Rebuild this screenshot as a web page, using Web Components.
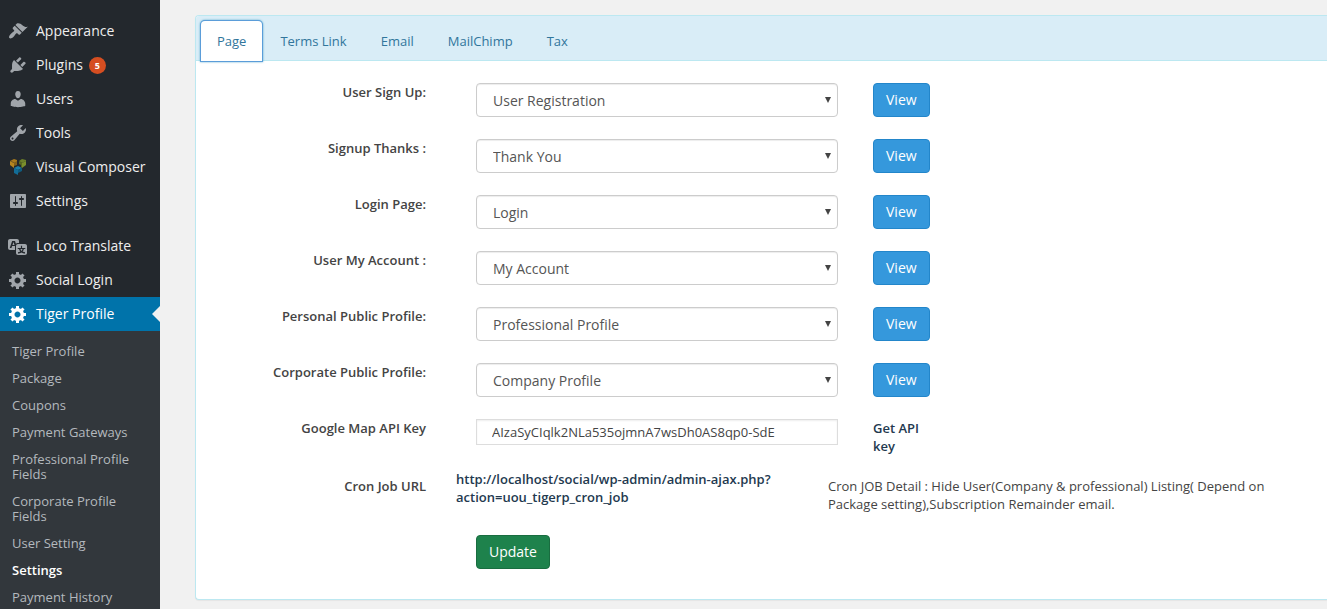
<!DOCTYPE html>
<html lang="en">
<head>
<meta charset="utf-8">
<title>Tiger Profile Settings</title>
<style>
  html { background: #f1f1f1; }
  body { margin: 0; font: 13px/18px "Open Sans", sans-serif; color: #444; }
</style>
</head>
<body>
<admin-app>
  <admin-menu slot="menu">
    <menu-item icon="appearance">Appearance</menu-item>
    <menu-item icon="plugins" count="5">Plugins</menu-item>
    <menu-item icon="users">Users</menu-item>
    <menu-item icon="tools">Tools</menu-item>
    <menu-item icon="composer">Visual Composer</menu-item>
    <menu-item icon="settings">Settings</menu-item>
    <menu-gap></menu-gap>
    <menu-item icon="translate">Loco Translate</menu-item>
    <menu-item icon="gear">Social Login</menu-item>
    <menu-item icon="gear" current>Tiger Profile</menu-item>
    <sub-menu>
      <sub-item>Tiger Profile</sub-item>
      <sub-item>Package</sub-item>
      <sub-item>Coupons</sub-item>
      <sub-item>Payment Gateways</sub-item>
      <sub-item>Professional Profile Fields</sub-item>
      <sub-item>Corporate Profile Fields</sub-item>
      <sub-item>User Setting</sub-item>
      <sub-item current>Settings</sub-item>
      <sub-item>Payment History</sub-item>
    </sub-menu>
  </admin-menu>
  <settings-panel>
    <tab-link slot="tabs" active>Page</tab-link>
    <tab-link slot="tabs">Terms Link</tab-link>
    <tab-link slot="tabs">Email</tab-link>
    <tab-link slot="tabs">MailChimp</tab-link>
    <tab-link slot="tabs">Tax</tab-link>
    <page-select label="User Sign Up:" value="User Registration"></page-select>
    <page-select label="Signup Thanks :" value="Thank You"></page-select>
    <page-select label="Login Page:" value="Login"></page-select>
    <page-select label="User My Account :" value="My Account"></page-select>
    <page-select label="Personal Public Profile:" value="Professional Profile"></page-select>
    <page-select label="Corporate Public Profile:" value="Company Profile"></page-select>
    <api-key-row></api-key-row>
    <cron-row></cron-row>
    <submit-row>Update</submit-row>
  </settings-panel>
</admin-app>

<script>
const define = (name, render) => customElements.define(name, class extends HTMLElement {
  connectedCallback() {
    if (this.shadowRoot) return;
    this.attachShadow({ mode: "open" }).innerHTML = render(this);
  }
});

const icons = {
  appearance: '<path d="M14.48 11.06L7.41 3.99l1.5-1.5c.5-.56 2.3-.47 3.51.32 1.21.8 1.43 1.28 2.91 2.1 1.18.64 2.45 1.26 4.45.85zm-.71.71L6.7 4.7 4.93 6.47c-.39.39-.39 1.02 0 1.41l1.06 1.06c.39.39.39 1.03 0 1.42-.6.6-1.43 1.11-2.21 1.69-.35.26-.7.53-1.01.84C1.43 14.23.4 16.08 1.4 17.07c.99 1 2.84-.03 4.18-1.36.31-.31.58-.66.85-1.02.57-.78 1.08-1.61 1.69-2.21.39-.39 1.02-.39 1.41 0l1.06 1.06c.39.39 1.02.39 1.41 0z"/>',
  plugins: '<path d="M13.11 4.36L9.87 7.6 8 5.73l3.24-3.24c.35-.34 1.05-.2 1.56.32.52.51.66 1.21.31 1.55zm-8 1.77l.91-1.12 9.01 9.01-1.19.84c-.71.71-2.63 1.16-3.82 1.16H6.14L4.9 17.26c-.59.59-1.54.59-2.12 0-.59-.58-.59-1.53 0-2.12l1.24-1.24v-3.88c0-1.13.4-3.19 1.09-3.89zm7.26 3.97l3.24-3.24c.34-.35 1.04-.21 1.55.31.52.51.66 1.21.31 1.55l-3.24 3.25z"/>',
  users: '<path d="M10 9.25c-2.27 0-2.73-3.44-2.73-3.44C7 4.02 7.82 2 9.97 2c2.16 0 2.98 2.02 2.71 3.81 0 0-.41 3.44-2.68 3.44zm0 2.57L12.72 10c2.39 0 4.52 2.33 4.52 4.53v2.49s-3.65 1.13-7.24 1.13c-3.65 0-7.24-1.13-7.24-1.13v-2.49c0-2.25 1.94-4.48 4.47-4.48z"/>',
  tools: '<path d="M16.68 9.77c-1.34 1.34-3.3 1.67-4.95.99l-5.41 6.52c-.99.99-2.59.99-3.58 0s-.99-2.59 0-3.57l6.52-5.42c-.68-1.65-.35-3.61.99-4.95 1.28-1.28 3.12-1.62 4.72-1.06l-2.89 2.89 2.82 2.82 2.86-2.87c.53 1.58.18 3.39-1.08 4.65zM3.81 16.21c.4.39 1.04.39 1.43 0 .4-.4.4-1.04 0-1.43-.39-.4-1.03-.4-1.43 0-.39.39-.39 1.03 0 1.43z"/>',
  composer: '<path fill="#a87a1c" d="M2 4l4-2 3 1v2L6 6 5 5z"/><path fill="#b5851f" d="M2 4l4 2v5L2 8z"/><path fill="#84611a" d="M6 6l3-2v4l-3 1z"/><path fill="#6d8029" d="M11 4l3-2 4 1v1l-4 2z"/><path fill="#59691f" d="M11 4l3 2v5l-1-1V8l-2-1z"/><path fill="#7b8f2c" d="M14 6l4-2v4l-4 3z"/><path fill="#1c7fa8" d="M6 11l4-2 4 2-4 2z"/><path fill="#136d97" d="M6 11l4 2v5l-4-2z"/><path fill="#0f5c80" d="M10 13l4-2v3l-4 2z"/>',
  settings: '<path d="M18 16V4c0-.55-.45-1-1-1H3c-.55 0-1 .45-1 1v12c0 .55.45 1 1 1h14c.55 0 1-.45 1-1zM8 11h1c.55 0 1 .45 1 1s-.45 1-1 1H8v1.500c0 .28-.22.5-.5.5s-.5-.22-.5-.5V13H6c-.55 0-1-.45-1-1s.45-1 1-1h1V5.500c0-.28.22-.5.5-.5s.5.22.5.5V11zm5-2h-1c-.55 0-1-.45-1-1s.45-1 1-1h1V5.500c0-.28.22-.5.5-.5s.5.22.5.5V7h1c.55 0 1 .45 1 1s-.45 1-1 1h-1v5.500c0 .28-.22.5-.5.5s-.5-.22-.5-.5V9z"/>',
  translate: '<path d="M11 7H9.490c-.63 0-1.250.3-1.590.7L7 5H4.130l-2.390 7h1.690l.74-2H7v4H2c-1.100 0-2-.9-2-2V5c0-1.100.9-2 2-2h7c1.100 0 2 .9 2 2v2zM6.510 9H4.490l1-2.930zM10 8h7c1.100 0 2 .9 2 2v7c0 1.100-.9 2-2 2h-7c-1.100 0-2-.9-2-2v-7c0-1.100.9-2 2-2zm7.250 5v-1.080h-3.170V9.750h-1.160v2.170H9.750V13h1.280c.11.85.56 1.850 1.280 2.620-.87.36-1.890.62-2.310.62-.01.02.22.97.2 1.460.84 0 2.210-.5 3.280-1.150 1.090.65 2.480 1.150 3.340 1.150-.02-.49.2-1.440.2-1.460-.43 0-1.490-.27-2.380-.63.7-.77 1.140-1.770 1.250-2.610h1.360zm-3.810 1.930c-.5-.46-.85-1.130-1.010-1.930h2.090c-.17.8-.51 1.470-1 1.930l-.04.03s-.03-.02-.04-.03z"/>',
  gear: '<path d="M18 12h-2.180c-.17.7-.44 1.350-.81 1.930l1.540 1.540-2.100 2.100-1.540-1.540c-.58.36-1.230.63-1.910.79V19H8v-2.180c-.68-.16-1.330-.43-1.910-.79l-1.540 1.540-2.120-2.120 1.540-1.540c-.36-.58-.63-1.230-.79-1.910H1V9.030h2.170c.16-.7.44-1.350.8-1.940L2.430 5.550l2.100-2.100 1.540 1.540c.58-.37 1.240-.64 1.930-.81V2h3v2.180c.68.16 1.330.43 1.910.79l1.540-1.540 2.120 2.120-1.540 1.540c.36.59.64 1.240.8 1.940H18V12zm-8.500 1.500c1.660 0 3-1.340 3-3s-1.340-3-3-3-3 1.340-3 3 1.340 3 3 3z"/>'
};

const reset = "*{box-sizing:border-box}";
// Column grid shared by the form rows
const row = `${reset}
  :host{display:grid;grid-template-columns:minmax(0,280fr) minmax(0,362fr) minmax(0,489fr);align-items:start;margin-bottom:22px}
  .label{padding-right:50px;text-align:right;font-weight:600}
  .side{padding-left:35px}
  a.strong{color:#23394f;font-weight:600;text-decoration:none}`;
const button = `.btn{display:inline-block;height:34px;padding:7px 12px;border:1px solid;border-radius:4px;
  font:14px/18px "Open Sans",sans-serif;color:#fff;text-decoration:none;vertical-align:top}`;

define("admin-app", () => `<style>${reset}
  :host{display:flex;height:100vh;overflow:hidden}
  main{flex:1;min-width:0;padding:15px 0 0 35px}
  </style><slot name="menu"></slot><main><slot></slot></main>`);

define("admin-menu", () => `<style>${reset}
  :host{display:block;flex:none;width:160px;background:#23282d}
  nav{padding-top:14px}</style><nav><slot></slot></nav>`);

define("menu-gap", () => `<style>:host{display:block;height:11px}</style>`);

define("menu-item", el => `<style>${reset}
  :host{display:block}
  a{position:relative;display:flex;align-items:center;height:34px;color:#eee;font-size:14px;line-height:18px;text-decoration:none}
  svg{flex:none;width:20px;height:20px;margin:0 8px;fill:#a0a5aa}
  .count{margin-left:6px;width:17px;height:17px;border-radius:50%;background:#d54e21;color:#fff;font-size:9px;line-height:17px;font-weight:700;text-align:center}
  :host([current]) a{background:#0073aa;color:#fff}
  :host([current]) svg{fill:#fff}
  :host([current]) a::after{content:"";position:absolute;right:0;top:9px;border:8px solid transparent;border-left:0;border-right-color:#f1f1f1}
  </style><a href="#"><svg viewBox="0 0 20 20" aria-hidden="true">${icons[el.getAttribute("icon")]}</svg><span><slot></slot></span>${
    el.hasAttribute("count") ? `<span class="count">${el.getAttribute("count")}</span>` : ""}</a>`);

define("sub-menu", () => `<style>:host{display:block;padding:7px 0;background:#32373c}</style><slot></slot>`);

define("sub-item", () => `<style>${reset}
  :host{display:block}
  a{display:block;padding:6px 12px;color:#b4b9be;font-size:13px;line-height:15px;text-decoration:none}
  :host([current]) a{color:#fff;font-weight:600}
  </style><a href="#"><slot></slot></a>`);

define("settings-panel", () => `<style>${reset}
  :host{display:block;background:#fff;border:1px solid #bce8f1;border-right:0;border-radius:4px 0 0 4px;box-shadow:0 1px 1px rgba(0,0,0,.05)}
  nav{display:flex;gap:2px;padding:5px 5px 0;background:#d9edf7;border-bottom:1px solid #bce8f1;border-radius:3px 0 0 0}
  form{margin:0;padding:22px 0 8px}
  </style><nav><slot name="tabs"></slot></nav><form><slot></slot></form>`);

define("tab-link", () => `<style>${reset}
  :host{display:block;margin-bottom:-1px}
  a{display:block;padding:10px 15px;border:1px solid transparent;border-radius:4px 4px 0 0;color:#31769c;text-decoration:none}
  :host([active]) a{background:#fff;box-shadow:0 0 0 1px #5b9dd9,0 0 2px 1px rgba(30,140,190,.8)}
  </style><a href="#"><slot></slot></a>`);

define("page-select", el => `<style>${row}${button}
  .field{position:relative}
  select{display:block;width:100%;height:34px;padding:2px 28px 0 16px;border:1px solid #ccc;border-radius:4px;background:#fff;
    box-shadow:inset 0 1px 1px rgba(0,0,0,.075);color:#555;font:14px/20px "Open Sans",sans-serif;appearance:none}
  svg{position:absolute;right:6px;top:14px;width:8px;height:6px;fill:#444;pointer-events:none}
  .btn{background:#3598dc;border-color:#2386ca}
  </style><label class="label" for="page">${el.getAttribute("label")}</label>
  <div class="field"><select id="page"><option>${el.getAttribute("value")}</option></select>
  <svg viewBox="0 0 8 6" aria-hidden="true"><path d="M1 0h6L4 6z"/></svg></div>
  <div class="side"><a class="btn" href="#">View</a></div>`);

define("api-key-row", () => `<style>${row}
  :host{margin-bottom:15px}
  input{display:block;width:100%;height:26px;padding:0 15px;border:1px solid #ddd;background:#fff;
    box-shadow:inset 0 1px 2px rgba(0,0,0,.07);color:#444;font:13px/18px "Open Sans",sans-serif}
  a{display:block;max-width:57px}
  </style><label class="label" for="key">Google Map API Key</label>
  <input id="key" type="text" value="AIzaSyCIqlk2NLa535ojmnA7wsDh0AS8qp0-SdE">
  <div class="side"><a class="strong" href="#">Get API key</a></div>`);

define("cron-row", () => `<style>${row}
  :host{grid-template-columns:minmax(0,260fr) minmax(0,372fr) minmax(0,499fr)}
  .label{padding:7px 30px 0 0}
  .url{padding-right:30px}
  .detail{padding:7px 30px 0 0}
  </style><div class="label">Cron Job URL</div>
  <div class="url"><a class="strong" href="#">http://localhost/social/wp-admin/admin-ajax.php?<wbr>action=uou_tigerp_cron_job</a></div>
  <div class="detail">Cron JOB Detail : Hide User(Company &amp; professional) Listing( Depend on Package setting),Subscription Remainder email.</div>`);

define("submit-row", () => `<style>${row}${button}
  .btn{grid-column:2;justify-self:start;background:#1e824c;border-color:#196d40}
  </style><button class="btn" type="button"><slot></slot></button>`);
</script>
</body>
</html>
